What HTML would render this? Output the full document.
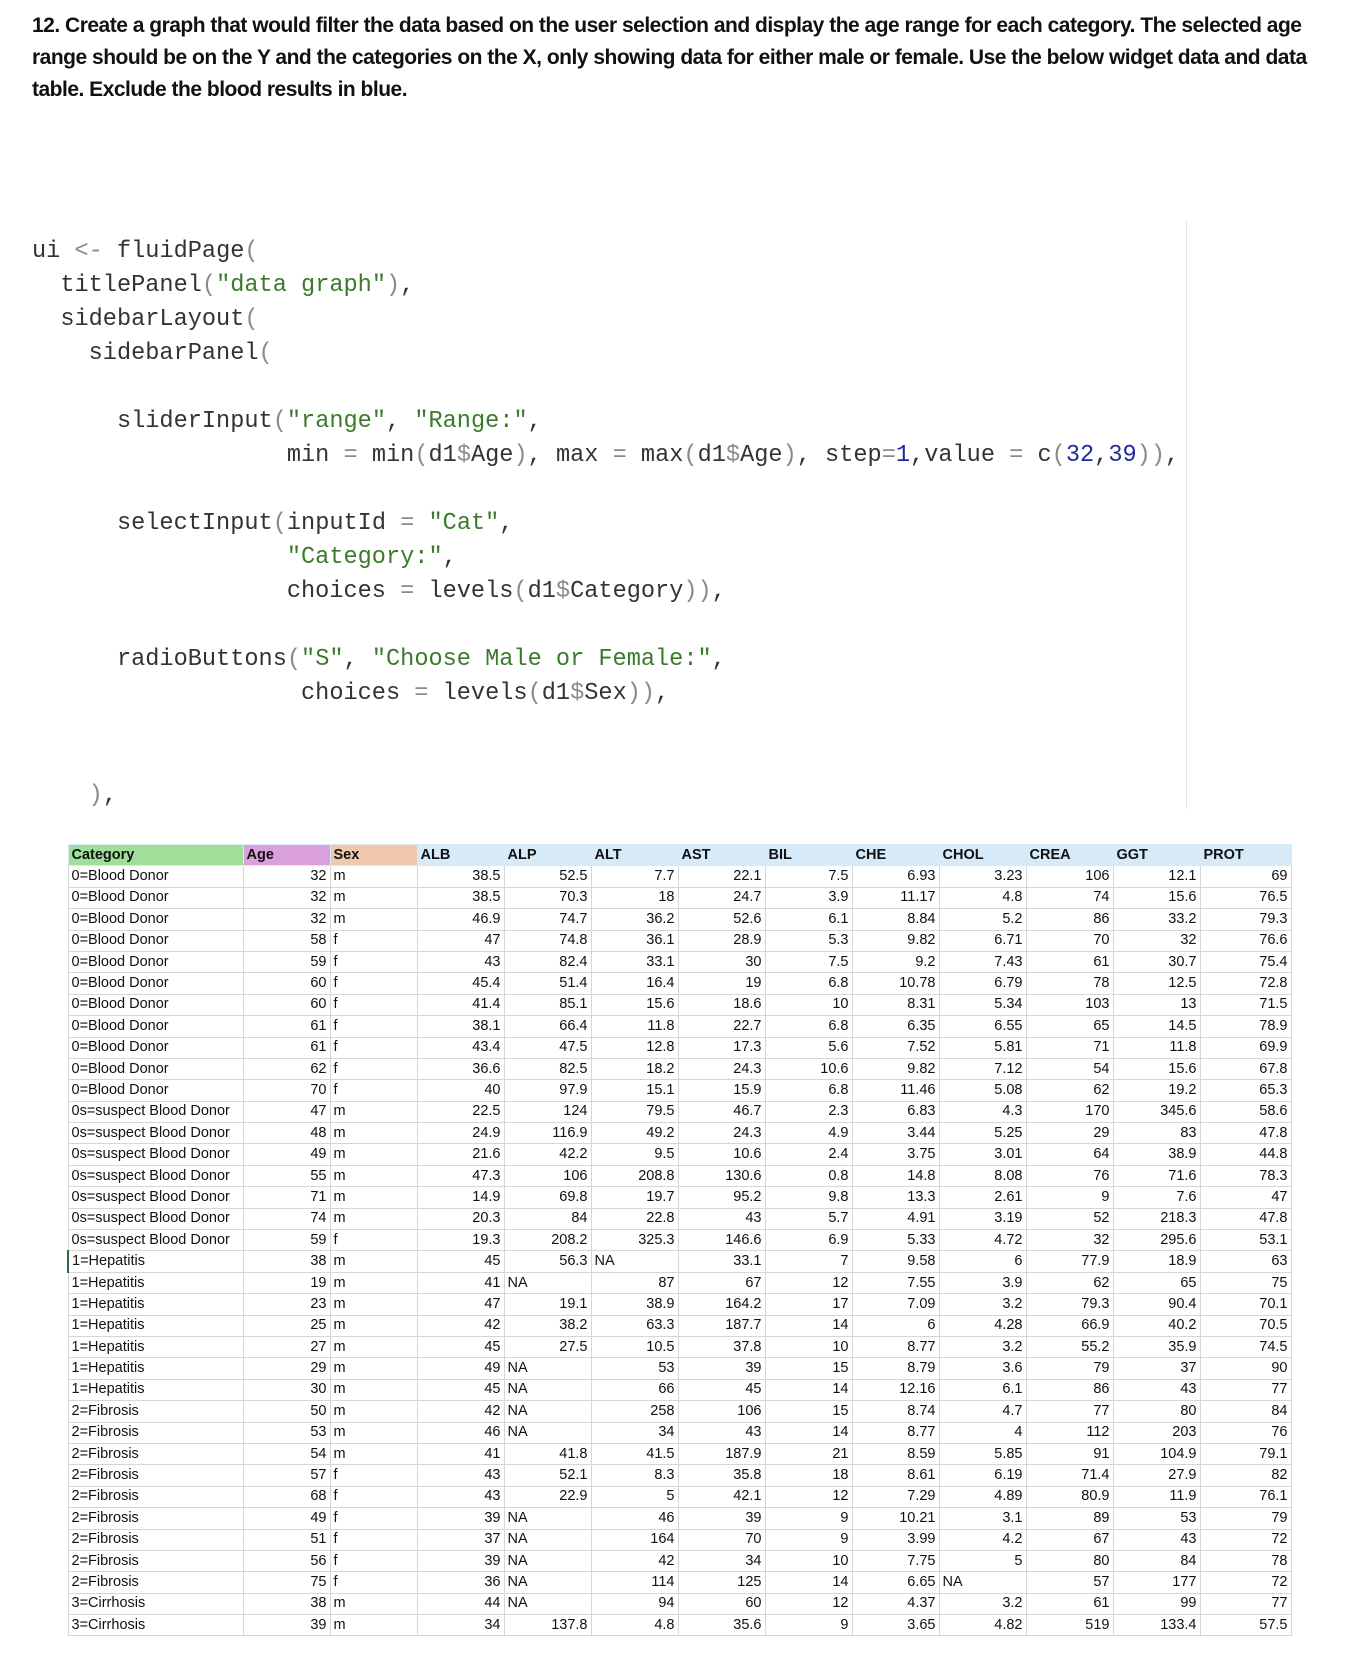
<!DOCTYPE html>
<html><head><meta charset="utf-8"><style>
body{margin:0;width:1358px;height:1660px;background:#fff;position:relative;overflow:hidden;font-family:"Liberation Sans Narrow","Liberation Sans",sans-serif;}
.q{position:absolute;left:32px;top:10px;width:1310px;font-weight:bold;font-size:21px;line-height:32px;color:#111;font-stretch:condensed;letter-spacing:-0.5px}
pre{position:absolute;left:32px;top:235px;margin:0;font-family:"Liberation Mono",monospace;font-size:23.6px;line-height:34px;color:#333}
.s{color:#3b7a2c}.n{color:#1f2a9c}.o{color:#8a8a8a}
.vl{position:absolute;left:1186px;top:221px;width:1px;height:588px;background:#e2e2e2}
table{position:absolute;left:67px;top:844px;border-collapse:collapse;table-layout:fixed;font-size:14.5px;color:#111}
td{height:20.4px;padding:0 3px;border:1px solid #d6d6d6;text-align:right;white-space:nowrap;overflow:hidden;line-height:19px}
td:first-child,td:nth-child(3),td.l{text-align:left}
tr.h td{font-weight:bold;text-align:left;background:#d6eaf8;border-color:#d6eaf8}
tr.h td:nth-child(1){background:#9fdf9a}tr.h td:nth-child(2){background:#d9a0db}tr.h td:nth-child(3){background:#f0c9ad}
</style></head><body>
<div class="q">12. Create a graph that would filter the data based on the user selection and display the age range for each category. The selected age range should be on the Y and the categories on the X, only showing data for either male or female. Use the below widget data and data table. Exclude the blood results in blue.</div>
<pre>ui <span class="o">&lt;-</span> fluidPage<span class="o">(</span>
  titlePanel<span class="o">(</span><span class="s">"data graph"</span><span class="o">)</span>,
  sidebarLayout<span class="o">(</span>
    sidebarPanel<span class="o">(</span>

      sliderInput<span class="o">(</span><span class="s">"range"</span>, <span class="s">"Range:"</span>,
                  min <span class="o">=</span> min<span class="o">(</span>d1<span class="o">$</span>Age<span class="o">)</span>, max <span class="o">=</span> max<span class="o">(</span>d1<span class="o">$</span>Age<span class="o">)</span>, step<span class="o">=</span><span class="n">1</span>,value <span class="o">=</span> c<span class="o">(</span><span class="n">32</span>,<span class="n">39</span><span class="o">))</span>,

      selectInput<span class="o">(</span>inputId <span class="o">=</span> <span class="s">"Cat"</span>,
                  <span class="s">"Category:"</span>,
                  choices <span class="o">=</span> levels<span class="o">(</span>d1<span class="o">$</span>Category<span class="o">))</span>,

      radioButtons<span class="o">(</span><span class="s">"S"</span>, <span class="s">"Choose Male or Female:"</span>,
                   choices <span class="o">=</span> levels<span class="o">(</span>d1<span class="o">$</span>Sex<span class="o">))</span>,


    <span class="o">)</span>,</pre>
<div class="vl"></div>
<table>
<colgroup><col style="width:175px"><col style="width:87px"><col style="width:87px"><col style="width:87px"><col style="width:87px"><col style="width:87px"><col style="width:87px"><col style="width:87px"><col style="width:87px"><col style="width:87px"><col style="width:87px"><col style="width:87px"><col style="width:91px"></colgroup>
<tr class="h"><td>Category</td><td>Age</td><td>Sex</td><td>ALB</td><td>ALP</td><td>ALT</td><td>AST</td><td>BIL</td><td>CHE</td><td>CHOL</td><td>CREA</td><td>GGT</td><td>PROT</td></tr>
<tr><td>0=Blood Donor</td><td>32</td><td>m</td><td>38.5</td><td>52.5</td><td>7.7</td><td>22.1</td><td>7.5</td><td>6.93</td><td>3.23</td><td>106</td><td>12.1</td><td>69</td></tr>
<tr><td>0=Blood Donor</td><td>32</td><td>m</td><td>38.5</td><td>70.3</td><td>18</td><td>24.7</td><td>3.9</td><td>11.17</td><td>4.8</td><td>74</td><td>15.6</td><td>76.5</td></tr>
<tr><td>0=Blood Donor</td><td>32</td><td>m</td><td>46.9</td><td>74.7</td><td>36.2</td><td>52.6</td><td>6.1</td><td>8.84</td><td>5.2</td><td>86</td><td>33.2</td><td>79.3</td></tr>
<tr><td>0=Blood Donor</td><td>58</td><td>f</td><td>47</td><td>74.8</td><td>36.1</td><td>28.9</td><td>5.3</td><td>9.82</td><td>6.71</td><td>70</td><td>32</td><td>76.6</td></tr>
<tr><td>0=Blood Donor</td><td>59</td><td>f</td><td>43</td><td>82.4</td><td>33.1</td><td>30</td><td>7.5</td><td>9.2</td><td>7.43</td><td>61</td><td>30.7</td><td>75.4</td></tr>
<tr><td>0=Blood Donor</td><td>60</td><td>f</td><td>45.4</td><td>51.4</td><td>16.4</td><td>19</td><td>6.8</td><td>10.78</td><td>6.79</td><td>78</td><td>12.5</td><td>72.8</td></tr>
<tr><td>0=Blood Donor</td><td>60</td><td>f</td><td>41.4</td><td>85.1</td><td>15.6</td><td>18.6</td><td>10</td><td>8.31</td><td>5.34</td><td>103</td><td>13</td><td>71.5</td></tr>
<tr><td>0=Blood Donor</td><td>61</td><td>f</td><td>38.1</td><td>66.4</td><td>11.8</td><td>22.7</td><td>6.8</td><td>6.35</td><td>6.55</td><td>65</td><td>14.5</td><td>78.9</td></tr>
<tr><td>0=Blood Donor</td><td>61</td><td>f</td><td>43.4</td><td>47.5</td><td>12.8</td><td>17.3</td><td>5.6</td><td>7.52</td><td>5.81</td><td>71</td><td>11.8</td><td>69.9</td></tr>
<tr><td>0=Blood Donor</td><td>62</td><td>f</td><td>36.6</td><td>82.5</td><td>18.2</td><td>24.3</td><td>10.6</td><td>9.82</td><td>7.12</td><td>54</td><td>15.6</td><td>67.8</td></tr>
<tr><td>0=Blood Donor</td><td>70</td><td>f</td><td>40</td><td>97.9</td><td>15.1</td><td>15.9</td><td>6.8</td><td>11.46</td><td>5.08</td><td>62</td><td>19.2</td><td>65.3</td></tr>
<tr><td>0s=suspect Blood Donor</td><td>47</td><td>m</td><td>22.5</td><td>124</td><td>79.5</td><td>46.7</td><td>2.3</td><td>6.83</td><td>4.3</td><td>170</td><td>345.6</td><td>58.6</td></tr>
<tr><td>0s=suspect Blood Donor</td><td>48</td><td>m</td><td>24.9</td><td>116.9</td><td>49.2</td><td>24.3</td><td>4.9</td><td>3.44</td><td>5.25</td><td>29</td><td>83</td><td>47.8</td></tr>
<tr><td>0s=suspect Blood Donor</td><td>49</td><td>m</td><td>21.6</td><td>42.2</td><td>9.5</td><td>10.6</td><td>2.4</td><td>3.75</td><td>3.01</td><td>64</td><td>38.9</td><td>44.8</td></tr>
<tr><td>0s=suspect Blood Donor</td><td>55</td><td>m</td><td>47.3</td><td>106</td><td>208.8</td><td>130.6</td><td>0.8</td><td>14.8</td><td>8.08</td><td>76</td><td>71.6</td><td>78.3</td></tr>
<tr><td>0s=suspect Blood Donor</td><td>71</td><td>m</td><td>14.9</td><td>69.8</td><td>19.7</td><td>95.2</td><td>9.8</td><td>13.3</td><td>2.61</td><td>9</td><td>7.6</td><td>47</td></tr>
<tr><td>0s=suspect Blood Donor</td><td>74</td><td>m</td><td>20.3</td><td>84</td><td>22.8</td><td>43</td><td>5.7</td><td>4.91</td><td>3.19</td><td>52</td><td>218.3</td><td>47.8</td></tr>
<tr><td>0s=suspect Blood Donor</td><td>59</td><td>f</td><td>19.3</td><td>208.2</td><td>325.3</td><td>146.6</td><td>6.9</td><td>5.33</td><td>4.72</td><td>32</td><td>295.6</td><td>53.1</td></tr>
<tr><td style="border-left:2px solid #2e6b3a">1=Hepatitis</td><td>38</td><td>m</td><td>45</td><td>56.3</td><td class="l">NA</td><td>33.1</td><td>7</td><td>9.58</td><td>6</td><td>77.9</td><td>18.9</td><td>63</td></tr>
<tr><td>1=Hepatitis</td><td>19</td><td>m</td><td>41</td><td class="l">NA</td><td>87</td><td>67</td><td>12</td><td>7.55</td><td>3.9</td><td>62</td><td>65</td><td>75</td></tr>
<tr><td>1=Hepatitis</td><td>23</td><td>m</td><td>47</td><td>19.1</td><td>38.9</td><td>164.2</td><td>17</td><td>7.09</td><td>3.2</td><td>79.3</td><td>90.4</td><td>70.1</td></tr>
<tr><td>1=Hepatitis</td><td>25</td><td>m</td><td>42</td><td>38.2</td><td>63.3</td><td>187.7</td><td>14</td><td>6</td><td>4.28</td><td>66.9</td><td>40.2</td><td>70.5</td></tr>
<tr><td>1=Hepatitis</td><td>27</td><td>m</td><td>45</td><td>27.5</td><td>10.5</td><td>37.8</td><td>10</td><td>8.77</td><td>3.2</td><td>55.2</td><td>35.9</td><td>74.5</td></tr>
<tr><td>1=Hepatitis</td><td>29</td><td>m</td><td>49</td><td class="l">NA</td><td>53</td><td>39</td><td>15</td><td>8.79</td><td>3.6</td><td>79</td><td>37</td><td>90</td></tr>
<tr><td>1=Hepatitis</td><td>30</td><td>m</td><td>45</td><td class="l">NA</td><td>66</td><td>45</td><td>14</td><td>12.16</td><td>6.1</td><td>86</td><td>43</td><td>77</td></tr>
<tr><td>2=Fibrosis</td><td>50</td><td>m</td><td>42</td><td class="l">NA</td><td>258</td><td>106</td><td>15</td><td>8.74</td><td>4.7</td><td>77</td><td>80</td><td>84</td></tr>
<tr><td>2=Fibrosis</td><td>53</td><td>m</td><td>46</td><td class="l">NA</td><td>34</td><td>43</td><td>14</td><td>8.77</td><td>4</td><td>112</td><td>203</td><td>76</td></tr>
<tr><td>2=Fibrosis</td><td>54</td><td>m</td><td>41</td><td>41.8</td><td>41.5</td><td>187.9</td><td>21</td><td>8.59</td><td>5.85</td><td>91</td><td>104.9</td><td>79.1</td></tr>
<tr><td>2=Fibrosis</td><td>57</td><td>f</td><td>43</td><td>52.1</td><td>8.3</td><td>35.8</td><td>18</td><td>8.61</td><td>6.19</td><td>71.4</td><td>27.9</td><td>82</td></tr>
<tr><td>2=Fibrosis</td><td>68</td><td>f</td><td>43</td><td>22.9</td><td>5</td><td>42.1</td><td>12</td><td>7.29</td><td>4.89</td><td>80.9</td><td>11.9</td><td>76.1</td></tr>
<tr><td>2=Fibrosis</td><td>49</td><td>f</td><td>39</td><td class="l">NA</td><td>46</td><td>39</td><td>9</td><td>10.21</td><td>3.1</td><td>89</td><td>53</td><td>79</td></tr>
<tr><td>2=Fibrosis</td><td>51</td><td>f</td><td>37</td><td class="l">NA</td><td>164</td><td>70</td><td>9</td><td>3.99</td><td>4.2</td><td>67</td><td>43</td><td>72</td></tr>
<tr><td>2=Fibrosis</td><td>56</td><td>f</td><td>39</td><td class="l">NA</td><td>42</td><td>34</td><td>10</td><td>7.75</td><td>5</td><td>80</td><td>84</td><td>78</td></tr>
<tr><td>2=Fibrosis</td><td>75</td><td>f</td><td>36</td><td class="l">NA</td><td>114</td><td>125</td><td>14</td><td>6.65</td><td class="l">NA</td><td>57</td><td>177</td><td>72</td></tr>
<tr><td>3=Cirrhosis</td><td>38</td><td>m</td><td>44</td><td class="l">NA</td><td>94</td><td>60</td><td>12</td><td>4.37</td><td>3.2</td><td>61</td><td>99</td><td>77</td></tr>
<tr><td>3=Cirrhosis</td><td>39</td><td>m</td><td>34</td><td>137.8</td><td>4.8</td><td>35.6</td><td>9</td><td>3.65</td><td>4.82</td><td>519</td><td>133.4</td><td>57.5</td></tr>
</table>
</body></html>
